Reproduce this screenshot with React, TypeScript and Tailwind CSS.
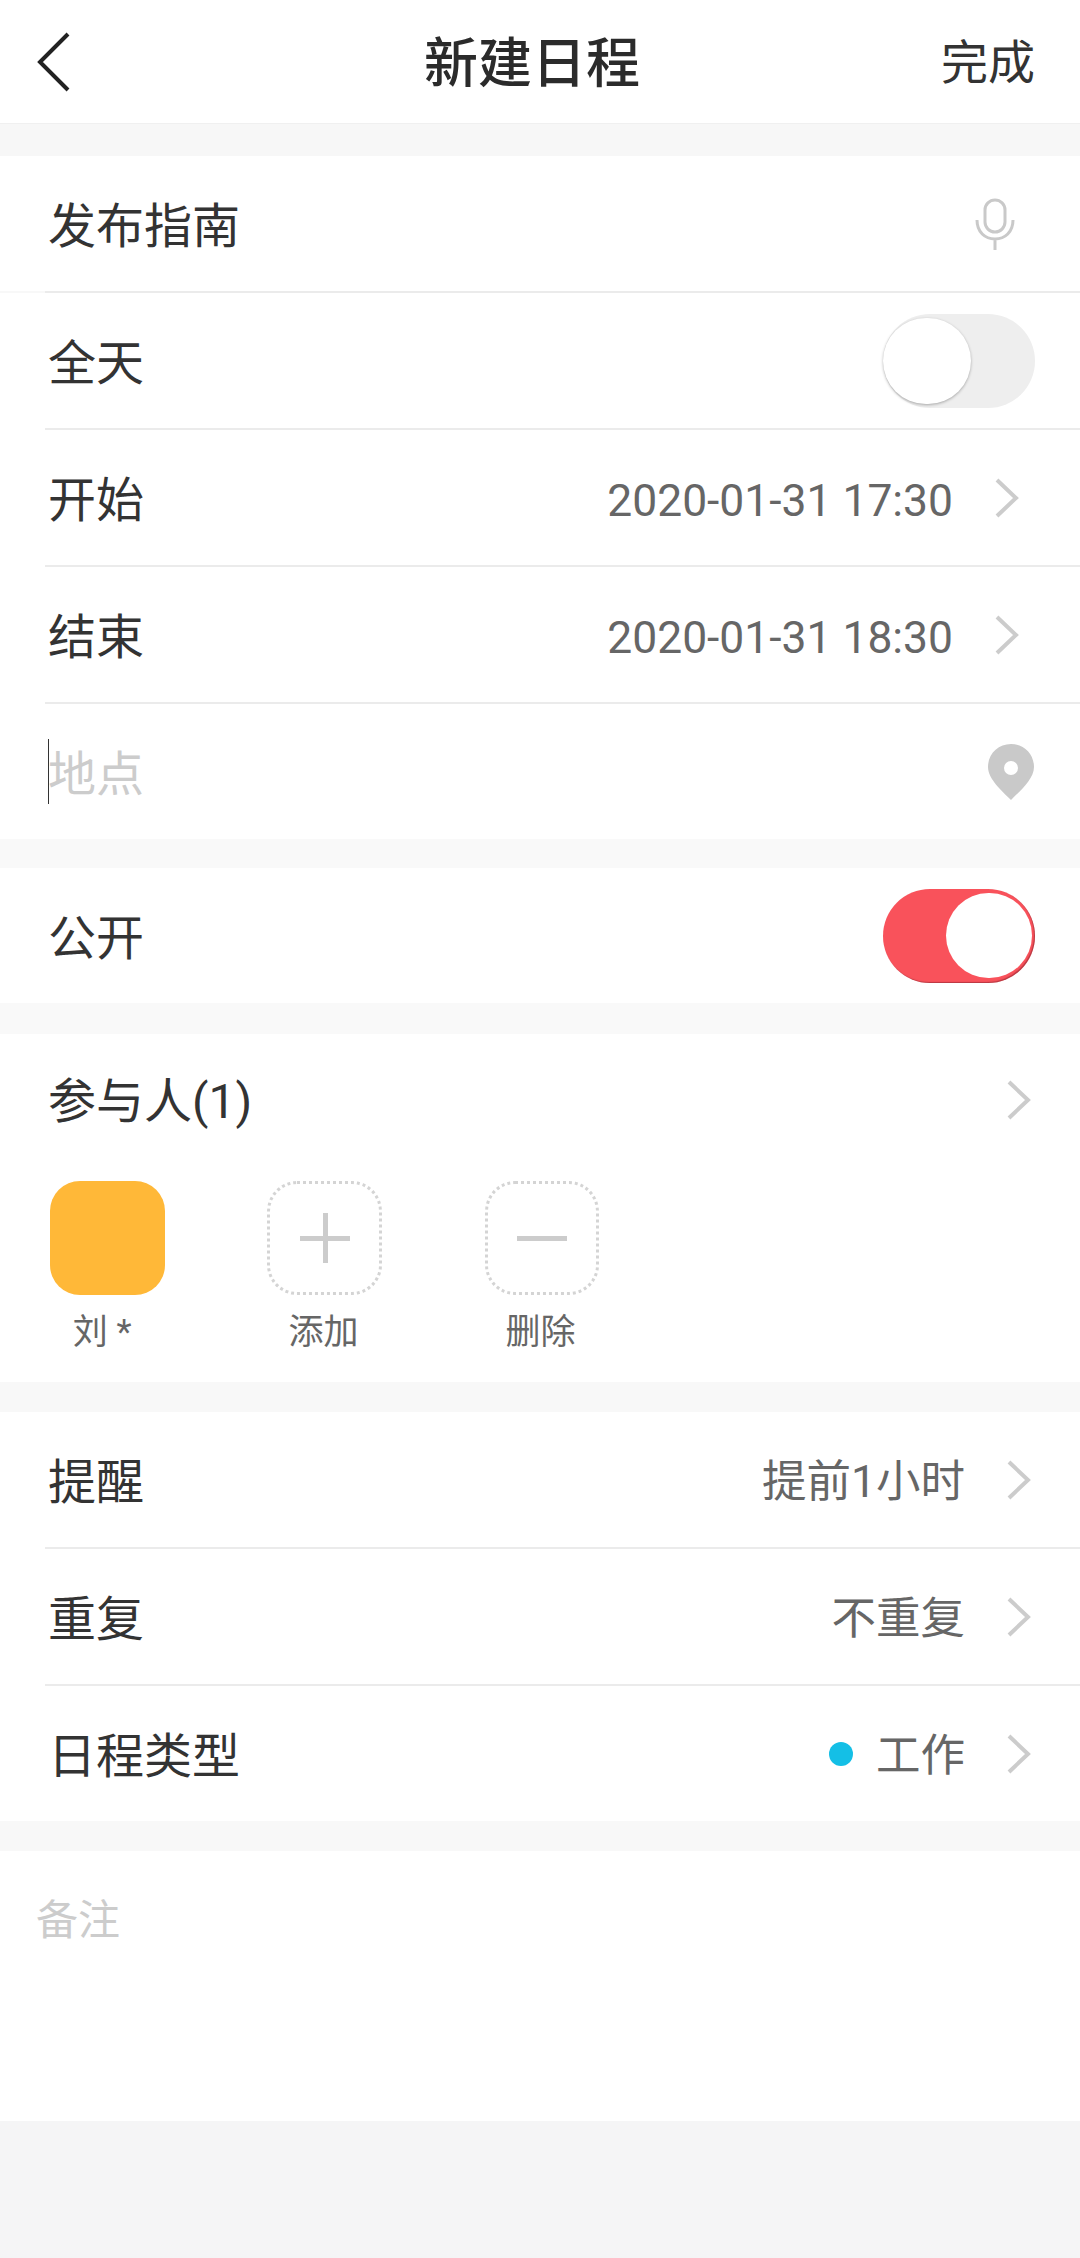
const font = { fontFamily: '"Roboto", "Noto Sans CJK SC", sans-serif' };

function Chevron({ className }: { className: string }) {
  return (
    <svg viewBox="0 0 26 42" fill="none" className={className}>
      <path d="M3 3 L22 21 L3 39" stroke="#cccccc" strokeWidth="4" />
    </svg>
  );
}

function Divider({ light }: { light?: boolean }) {
  return (
    <div className={light ? "h-[2px] bg-[#f8f8f8]" : "h-[2px] bg-white"}>
      <div className="ml-[45px] h-full bg-[#ebebeb]" />
    </div>
  );
}

function Row({ label, children }: { label: string; children?: React.ReactNode }) {
  return (
    <div className="flex h-[135px] items-center justify-between bg-white pl-[48px] text-[48px] text-[#333333]">
      <span className="pt-[7px]">{label}</span>
      {children}
    </div>
  );
}

function DateValue({ value }: { value: string }) {
  return (
    <div className="flex items-center">
      <span className="pt-[8px] text-[44.4px] text-[#666666]">{value}</span>
      <Chevron className="mt-[2px] mr-[60px] ml-[41px] h-[42px] w-[26px]" />
    </div>
  );
}

function PickValue({ value, dot }: { value: string; dot?: boolean }) {
  return (
    <div className="flex items-center">
      {dot && <span className="mr-[23px] h-[24px] w-[24px] rounded-full bg-[#14bfe6]" />}
      <span className="pt-[6px] text-[44.5px] text-[#666666]">{value}</span>
      <Chevron className="mr-[48px] ml-[41px] h-[42px] w-[26px]" />
    </div>
  );
}

function Toggle({ on }: { on?: boolean }) {
  return (
    <div
      className={
        on
          ? "mr-[45px] flex h-[94px] w-[152px] items-center justify-end rounded-full bg-[#f9525b] pr-[3px] shadow-[inset_-1px_-1px_1px_rgba(120,30,40,0.5)]"
          : "mr-[45px] flex h-[94px] w-[152px] items-center rounded-full bg-[#eeeeee]"
      }
    >
      <div
        className={
          on
            ? "h-[85px] w-[86px] rounded-full bg-white"
            : "h-[86px] w-[88px] rounded-full bg-white shadow-[0_1px_3px_rgba(0,0,0,0.3)]"
        }
      />
    </div>
  );
}

function Member({ label, children }: { label: string; children: React.ReactNode }) {
  return (
    <div className="flex w-[115px] flex-col items-center">
      {children}
      <span className="mt-[12px] pr-[2px] text-[35px] whitespace-pre text-[#666666]">{label}</span>
    </div>
  );
}

export default function App() {
  return (
    <div className="flex h-[2258px] w-[1080px] flex-col bg-[#f5f5f6]" style={font}>
      <header className="flex h-[124px] items-center border-b border-[#f0f0f0] bg-white">
        <div className="w-[424px] pl-[37px]">
          <svg viewBox="0 0 34 60" fill="none" className="h-[60px] w-[34px]">
            <path d="M31 2 L3 30 L31 58" stroke="#222222" strokeWidth="4" />
          </svg>
        </div>
        <h1 className="pt-[6px] text-[54px] font-medium text-[#2b2b2b]">新建日程</h1>
        <span className="mr-[45px] ml-auto pt-[3px] text-[47px] text-[#333333]">完成</span>
      </header>
      <div className="h-[32px] shrink-0 bg-[#f7f7f7]" />

      <Row label="发布指南">
        <svg viewBox="0 0 40 52" fill="none" stroke="#c9c9c9" strokeWidth="3" className="mr-[65px] h-[52px] w-[40px]">
          <rect x="10" y="2" width="20" height="32" rx="10" />
          <path d="M2 22 C2 34 10 41 20 41 C30 41 38 34 38 22 M20 41 V52" />
        </svg>
      </Row>
      <Divider light />
      <Row label="全天">
        <Toggle />
      </Row>
      <Divider />
      <Row label="开始">
        <DateValue value="2020-01-31 17:30" />
      </Row>
      <Divider />
      <Row label="结束">
        <DateValue value="2020-01-31 18:30" />
      </Row>
      <Divider />
      <div className="flex h-[135px] items-center justify-between bg-white pl-[48px]">
        <div className="flex items-center">
          <span className="h-[65px] w-px bg-[#333333]" />
          <span className="-ml-px pt-[6px] text-[48px] text-[#cccccc]">地点</span>
        </div>
        <svg viewBox="0 0 48 56" className="mr-[45px] h-[56px] w-[48px]">
          <path
            fillRule="evenodd"
            fill="#c9c9c9"
            d="M24 0 C37 0 47 10 47 23 C47 35 33 47 24 56 C15 47 1 35 1 23 C1 10 11 0 24 0 Z M24 17 A7 7 0 1 0 24 31 A7 7 0 1 0 24 17 Z"
          />
        </svg>
      </div>

      <div className="h-[29px] shrink-0 bg-[#f9f9f9]" />
      <Row label="公开">
        <Toggle on />
      </Row>
      <div className="h-[31px] shrink-0 bg-[#f9f9f9]" />

      <section className="flex h-[348px] flex-col bg-white pl-[48px]">
        <div className="flex h-[128px] items-center justify-between text-[48px] text-[#333333]">
          <span className="pt-[8px]">参与人(1)</span>
          <Chevron className="mt-[4px] mr-[48px] h-[42px] w-[26px]" />
        </div>
        <div className="mt-[19px] flex gap-[102px] pl-[2px]">
          <Member label={"刘 * "}>
            <div className="h-[114px] w-[115px] rounded-[30px] bg-[#ffb838]" />
          </Member>
          <Member label="添加">
            <div className="relative h-[114px] w-[115px] rounded-[30px] border-[3px] border-dotted border-[#d4d4d4]">
              <div className="absolute top-[29px] left-[30px] h-[50px] w-[50px]">
                <div className="absolute top-[23px] left-0 h-[5px] w-[50px] bg-[#cccccc]" />
                <div className="absolute top-0 left-[23px] h-[50px] w-[5px] bg-[#cccccc]" />
              </div>
            </div>
          </Member>
          <Member label="删除">
            <div className="flex h-[114px] w-[114px] items-center justify-center rounded-[30px] border-[3px] border-dotted border-[#d4d4d4]">
              <div className="h-[5px] w-[50px] bg-[#cccccc]" />
            </div>
          </Member>
        </div>
      </section>
      <div className="h-[30px] shrink-0 bg-[#f8f8f8]" />

      <Row label="提醒">
        <PickValue value="提前1小时" />
      </Row>
      <Divider />
      <Row label="重复">
        <PickValue value="不重复" />
      </Row>
      <Divider />
      <Row label="日程类型">
        <PickValue value="工作" dot />
      </Row>
      <div className="h-[30px] shrink-0 bg-[#f8f8f8]" />

      <div className="h-[270px] bg-white pt-[38px] pl-[36px] text-[42px] text-[#cccccc]">备注</div>
    </div>
  );
}
